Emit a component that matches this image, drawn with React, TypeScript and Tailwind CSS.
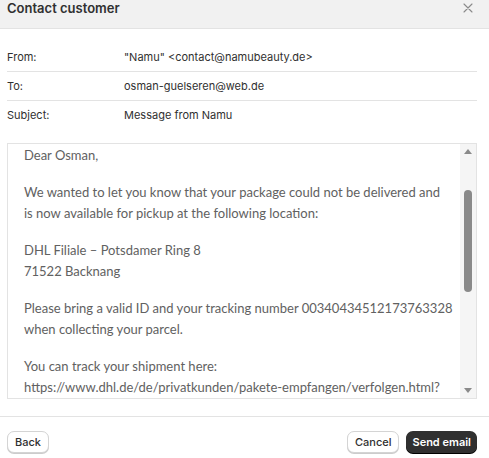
import React from "react";

const fields = [
  { label: "From:", value: "\"Namu\" <contact@namubeauty.de>" },
  { label: "To:", value: "osman-guelseren@web.de" },
  { label: "Subject:", value: "Message from Namu" },
];

const paragraphs = [
  ["Dear Osman,"],
  [
    "We wanted to let you know that your package could not be delivered and",
    "is now available for pickup at the following location:",
  ],
  ["DHL Filiale – Potsdamer Ring 8", "71522 Backnang"],
  [
    "Please bring a valid ID and your tracking number 00340434512173763328",
    "when collecting your parcel.",
  ],
  [
    "You can track your shipment here:",
    "https://www.dhl.de/de/privatkunden/pakete-empfangen/verfolgen.html?",
  ],
];

export default function App() {
  return (
    <div className="w-[489px] h-[458px] bg-white overflow-hidden font-['Inter',sans-serif] text-[#303030]">
      {/* header */}
      <div className="h-[29px] bg-[#f1f1f1] border-b border-[#e3e3e3] flex items-start justify-between pl-[7px] pr-[16px]">
        <h2 className="text-[13px] font-semibold leading-[16px] text-[#303030]">Contact customer</h2>
        <svg width="10" height="10" viewBox="0 0 10 10" className="mt-[3px]">
          <path d="M1 1L9 9M9 1L1 9" stroke="#8a8a8a" strokeWidth="1.1" strokeLinecap="round" />
        </svg>
      </div>

      {/* fields */}
      <div className="pl-[7px] pr-[12px] pt-[14px]">
        {fields.map((f, i) => (
          <div
            key={f.label}
            className={`flex items-center h-[29px] text-[11px] ${i < fields.length - 1 ? "border-b border-[#e3e3e3]" : ""}`}
          >
            <span className="w-[117px] text-[#303030]">{f.label}</span>
            <span className="text-[#303030]">{f.value}</span>
          </div>
        ))}
      </div>

      {/* message body */}
      <div className="ml-[7px] mr-[12px] mt-[13px] h-[256px] border border-[#e3e3e3] flex">
        <div className="flex-1 overflow-hidden pl-[16px] pt-[1px] font-['Lato',sans-serif] text-[13px] leading-[21px] text-[#616161]">
          {paragraphs.map((p, i) => (
            <div key={i} className="mb-[16px]">
              {p.map((l) => (
                <div key={l} className="whitespace-nowrap">{l}</div>
              ))}
            </div>
          ))}
        </div>
        <div className="w-[16px] bg-[#f5f5f5] flex flex-col items-center py-[5px]">
          <svg width="8" height="5" viewBox="0 0 8 5">
            <path d="M0 5L4 0L8 5Z" fill="#8a8a8a" />
          </svg>
          <div className="w-[8px] h-[102px] rounded-full bg-[#8a8a8a] mt-[36px]" />
          <svg width="8" height="5" viewBox="0 0 8 5" className="mt-auto">
            <path d="M0 0L4 5L8 0Z" fill="#8a8a8a" />
          </svg>
        </div>
      </div>

      {/* footer */}
      <div className="mt-[17px] border-t border-[#e3e3e3] pl-[7px] pr-[12px] pt-[14px] flex items-center justify-between">
        <button className="h-[22px] px-[7px] rounded-[7px] border border-[#d4d4d4] shadow-[0_1px_0_#cccccc] text-[11px] font-medium bg-white">
          Back
        </button>
        <div className="flex gap-[7px]">
          <button className="h-[22px] px-[7px] rounded-[7px] border border-[#d4d4d4] shadow-[0_1px_0_#cccccc] text-[11px] font-medium bg-white">
            Cancel
          </button>
          <button className="h-[22px] px-[6px] rounded-[7px] bg-[#303030] shadow-[0_1px_0_#000000] text-[11px] font-semibold text-white">
            Send email
          </button>
        </div>
      </div>
    </div>
  );
}
